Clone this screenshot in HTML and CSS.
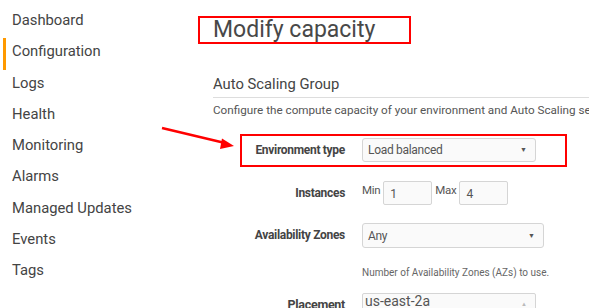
FILE: index.html
```html
<!DOCTYPE html>
<html>
<head>
<meta charset="utf-8">
<link rel="stylesheet" href="styles.css">
</head>
<body>
<div class="page">
  <nav class="sidebar">
    <a class="nav-item">Dashboard</a>
    <a class="nav-item active">Configuration</a>
    <a class="nav-item">Logs</a>
    <a class="nav-item">Health</a>
    <a class="nav-item">Monitoring</a>
    <a class="nav-item">Alarms</a>
    <a class="nav-item">Managed Updates</a>
    <a class="nav-item">Events</a>
    <a class="nav-item">Tags</a>
  </nav>
  <main class="main">
    <h1 class="title">Modify capacity</h1>
    <section class="section">
      <h2 class="section-title">Auto Scaling Group</h2>
      <p class="desc">Configure the compute capacity of your environment and Auto Scaling settings to optimize the number of instances used.</p>
      <div class="form">
        <div class="row highlight">
          <label class="label">Environment type</label>
          <div class="field">
            <div class="select w174"><span>Load balanced</span><span class="caret">&#9660;</span></div>
          </div>
        </div>
        <div class="row instances">
          <label class="label">Instances</label>
          <div class="field inline">
            <span class="mini">Min</span><div class="input">1</div>
            <span class="mini">Max</span><div class="input">4</div>
          </div>
        </div>
        <div class="row az">
          <label class="label">Availability Zones</label>
          <div class="field">
            <div class="select w182"><span>Any</span><span class="caret">&#9660;</span></div>
            <div class="help">Number of Availability Zones (AZs) to use.</div>
          </div>
        </div>
        <div class="row placement">
          <label class="label">Placement</label>
          <div class="field">
            <div class="listbox"><span>us-east-2a</span><span class="caret up">&#9650;</span></div>
          </div>
        </div>
      </div>
    </section>
  </main>
  <svg class="arrow" width="589" height="308" viewBox="0 0 589 308">
    <line x1="162" y1="128" x2="225" y2="143" stroke="#f00" stroke-width="2.5"/>
    <polygon points="234,146 222,138.5 220,149" fill="#f00"/>
  </svg>
</div>
</body>
</html>
```

FILE: styles.css
```css
html, body {
  margin: 0;
  padding: 0;
  background: #fff;
}
body {
  font-family: Roboto, "Noto Sans", "Liberation Sans", sans-serif;
  color: #444;
  width: 589px;
  height: 308px;
  overflow: hidden;
}
.page {
  position: relative;
  display: flex;
  width: 589px;
  height: 308px;
  overflow: hidden;
}
.sidebar {
  width: 198px;
  flex: none;
  display: flex;
  flex-direction: column;
  padding-top: 7px;
}
.nav-item {
  display: block;
  height: 31.25px;
  line-height: 26px;
  font-size: 14.8px;
  color: #444;
  border-left: 3px solid transparent;
  margin-left: 3px;
  padding-left: 6px;
  box-sizing: border-box;
}
.nav-item.active {
  border-left-color: #f90;
}
.main {
  flex: 1;
  min-width: 0;
  padding-top: 16px;
}
.title {
  margin: 0;
  width: 213px;
  height: 28px;
  box-sizing: border-box;
  border: 2px solid #f00;
  padding-left: 13px;
  font-size: 23px;
  font-weight: 400;
  line-height: 24px;
  color: #484848;
}
.section {
  padding-left: 15px;
}
.section-title {
  margin: 30px 0 0;
  font-size: 14.8px;
  font-weight: 400;
  line-height: 20px;
  padding-bottom: 3px;
  border-bottom: 1px solid #ddd;
  color: #444;
  white-space: nowrap;
}
.desc {
  margin: 4px 0 0;
  font-size: 11.7px;
  line-height: 16px;
  color: #555;
  white-space: nowrap;
}
.form {
  margin-left: 27px;
  margin-top: 16px;
  display: flex;
  flex-direction: column;
}
.row {
  width: 327px;
  box-sizing: border-box;
  border: 2px solid transparent;
  display: flex;
  align-items: flex-start;
  gap: 17px;
}
.row.highlight {
  border-color: #f00;
  padding: 2px 0 3px;
  align-items: center;
}
.label {
  width: 103px;
  flex: none;
  text-align: right;
  font-size: 12px;
  letter-spacing: -0.3px;
  font-weight: 700;
  color: #444;
}
.highlight .label {
  line-height: 24px;
}
.field {
  display: flex;
  flex-direction: column;
}
.select, .listbox {
  box-sizing: border-box;
  border: 1px solid #d5d5d5;
  border-radius: 3px;
  background: #fafafa;
  height: 24px;
  display: flex;
  align-items: center;
  justify-content: space-between;
  padding: 0 8px 0 5px;
  font-size: 12px;
  letter-spacing: -0.3px;
  color: #555;
}
.w174 { width: 174px; }
.w182 { width: 182px; height: 25px; }
.caret {
  font-size: 7px;
  color: #555;
  letter-spacing: 0;
}
.caret.up {
  color: #bbb;
}
.instances {
  margin-top: 12px;
  align-items: center;
}
.instances .label {
  line-height: 24px;
}
.inline {
  flex-direction: row;
  align-items: flex-start;
  gap: 3px;
}
.mini {
  font-size: 11.5px;
  letter-spacing: -0.3px;
  line-height: 18px;
  color: #555;
}
.input {
  box-sizing: border-box;
  width: 49px;
  height: 24px;
  border: 1px solid #d5d5d5;
  border-radius: 2px;
  background: #fafafa;
  font-size: 12px;
  line-height: 24px;
  padding-left: 6px;
  color: #555;
}
.az {
  margin-top: 14px;
}
.az .label {
  line-height: 25px;
}
.help {
  margin-top: 18px;
  font-size: 10px;
  line-height: 14px;
  color: #666;
  white-space: nowrap;
}
.placement {
  margin-top: 9px;
}
.placement .label {
  line-height: 16px;
  padding-top: 4px;
  font-size: 12.5px;
}
.listbox {
  width: 174px;
  height: 40px;
  align-items: flex-start;
  padding-top: 0;
  border-radius: 2px;
  font-size: 14px;
  letter-spacing: 0;
  line-height: 14px;
  padding-left: 2px;
}
.listbox .caret {
  margin-top: 3px;
  font-size: 6px;
}
.arrow {
  position: absolute;
  left: 0;
  top: 0;
  pointer-events: none;
}
```
